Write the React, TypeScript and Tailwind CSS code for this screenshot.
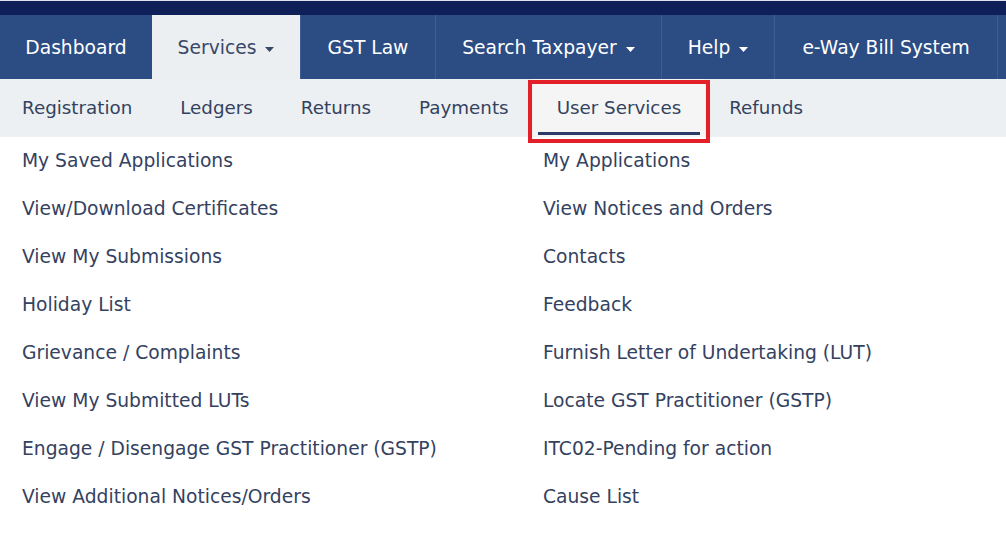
import React from "react";

const Caret = ({ color }: { color: string }) => (
  <svg width="9" height="5" viewBox="0 0 9 5" className="ml-[9px] mt-[2px]">
    <path d="M0 0 L9 0 L4.5 5 Z" fill={color} />
  </svg>
);

const mainNav = [
  { label: "Dashboard", w: "w-[152px]", caret: false, active: false },
  { label: "Services", w: "w-[148px]", caret: true, active: true },
  { label: "GST Law", w: "w-[135px]", caret: false, active: false, sep: true },
  { label: "Search Taxpayer", w: "w-[226px]", caret: true, active: false, sep: true },
  { label: "Help", w: "w-[113px]", caret: true, active: false, sep: true },
  { label: "e-Way Bill System", w: "w-[223px]", caret: false, active: false, sep: true },
];

const subNav = ["Registration", "Ledgers", "Returns", "Payments", "User Services", "Refunds"];

const left = [
  "My Saved Applications",
  "View/Download Certificates",
  "View My Submissions",
  "Holiday List",
  "Grievance / Complaints",
  "View My Submitted LUTs",
  "Engage / Disengage GST Practitioner (GSTP)",
  "View Additional Notices/Orders",
];
const right = [
  "My Applications",
  "View Notices and Orders",
  "Contacts",
  "Feedback",
  "Furnish Letter of Undertaking (LUT)",
  "Locate GST Practitioner (GSTP)",
  "ITC02-Pending for action",
  "Cause List",
];

export default function App() {
  return (
    <div
      className="w-[1006px] h-[556px] bg-white overflow-hidden text-[18.7px]"
      style={{ fontFamily: '"DejaVu Sans", Verdana, sans-serif' }}
    >
      <div className="h-[1px] bg-[#dfe4ee]" />
      <div className="h-[14px] bg-[#0f2058]" />
      <div className="h-[64px] bg-[#2c4c84] flex">
        {mainNav.map((n) => (
          <div
            key={n.label}
            className={`${n.w} h-full flex items-center justify-center pt-[2px] ${
              n.active ? "bg-[#eceff1] text-[#3a4868]" : "text-white"
            } ${n.sep ? "border-l border-[#3f5d92]" : ""}`}
          >
            <span>{n.label}</span>
            {n.caret && <Caret color={n.active ? "#3a4868" : "#ffffff"} />}
          </div>
        ))}
        <div className="flex-1 h-full border-l border-[#3f5d92]" />
      </div>
      <div className="h-[58px] bg-[#ecf0f2] flex ml-[-2px] text-[#34425f] text-[18.3px]">
        {subNav.map((s) => {
          const active = s === "User Services";
          return (
            <div
              key={s}
              className={`relative h-full flex items-center px-6 ${
                active ? "bg-[#f5f5f5]" : ""
              }`}
            >
              <span className="mt-[-1px]">{s}</span>
              {active && (
                <>
                  <div className="absolute left-[5px] right-[5px] bottom-[2px] h-[3px] bg-[#2c3c68]" />
                  <div className="absolute left-[-5px] right-[-5px] top-[1px] bottom-[-6px] border-[4px] border-[#e3202a]" />
                </>
              )}
            </div>
          );
        })}
      </div>
      <div className="grid grid-cols-[521px_1fr] pl-[22px] text-[#34425f]">
        <div className="flex flex-col">
          {left.map((t) => (
            <div key={t} className="h-12 flex items-center">
              {t}
            </div>
          ))}
        </div>
        <div className="flex flex-col">
          {right.map((t) => (
            <div key={t} className="h-12 flex items-center">
              {t}
            </div>
          ))}
        </div>
      </div>
    </div>
  );
}
